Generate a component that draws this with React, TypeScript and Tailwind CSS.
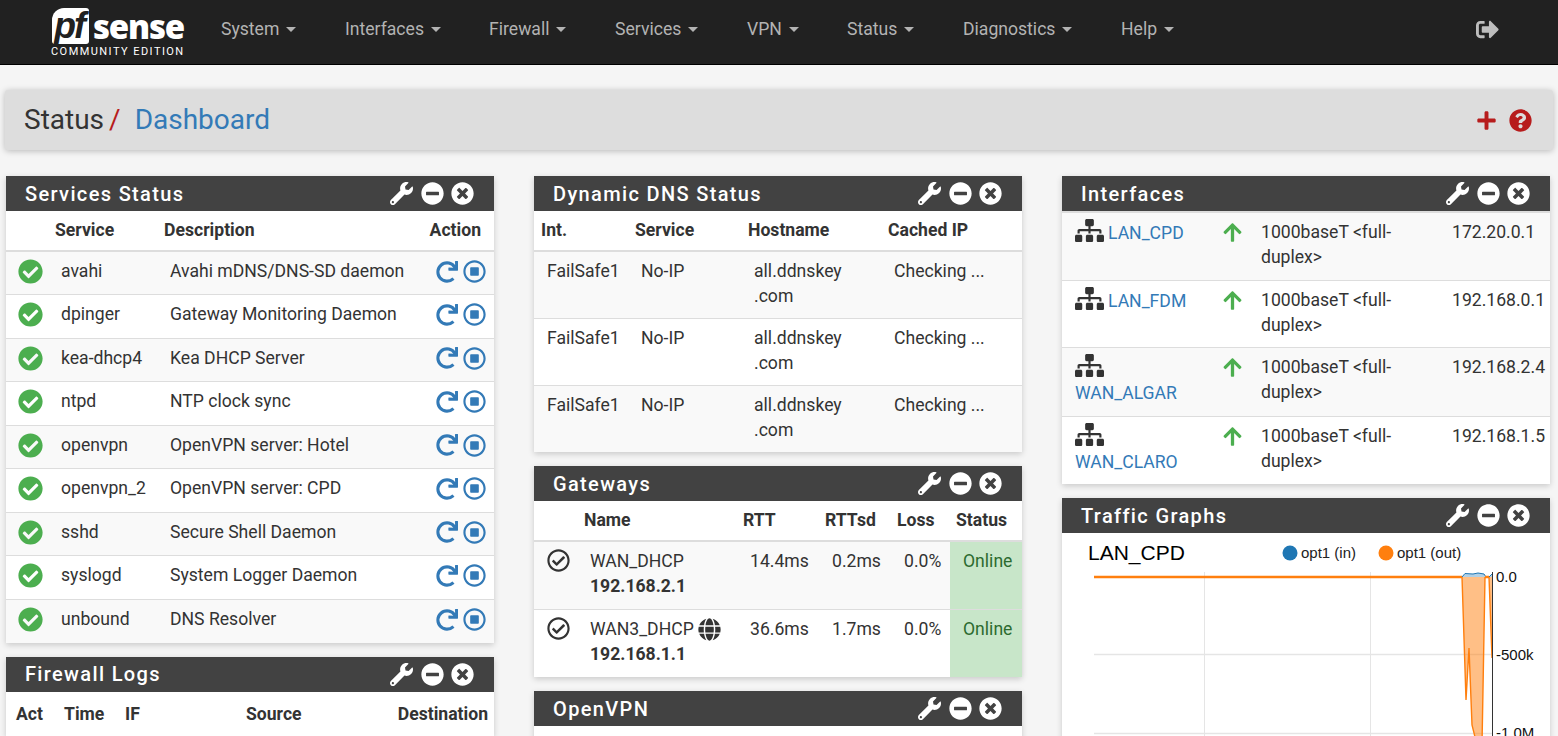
import type { ReactNode } from 'react'
import {
  FaArrowUp,
  FaCheckCircle,
  FaGlobe,
  FaMinusCircle,
  FaPlus,
  FaQuestionCircle,
  FaRedo,
  FaRegCheckCircle,
  FaRegStopCircle,
  FaSignOutAlt,
  FaSitemap,
  FaTimesCircle,
  FaWrench,
} from 'react-icons/fa'

const navItems = [
  { label: 'System', w: 'w-[124px]' },
  { label: 'Interfaces', w: 'w-[144px]' },
  { label: 'Firewall', w: 'w-[126px]' },
  { label: 'Services', w: 'w-[132px]' },
  { label: 'VPN', w: 'w-[100px]' },
  { label: 'Status', w: 'w-[116px]' },
  { label: 'Diagnostics', w: 'w-[158px]' },
  { label: 'Help', w: 'w-[60px]' },
]

const services = [
  ['avahi', 'Avahi mDNS/DNS-SD daemon'],
  ['dpinger', 'Gateway Monitoring Daemon'],
  ['kea-dhcp4', 'Kea DHCP Server'],
  ['ntpd', 'NTP clock sync'],
  ['openvpn', 'OpenVPN server: Hotel'],
  ['openvpn_2', 'OpenVPN server: CPD'],
  ['sshd', 'Secure Shell Daemon'],
  ['syslogd', 'System Logger Daemon'],
  ['unbound', 'DNS Resolver'],
]

const interfaces = [
  { name: 'LAN_CPD', ip: '172.20.0.1', h: 'h-[68px]' },
  { name: 'LAN_FDM', ip: '192.168.0.1', h: 'h-[67px]' },
  { name: 'WAN_ALGAR', ip: '192.168.2.4', h: 'h-[69px]' },
  { name: 'WAN_CLARO', ip: '192.168.1.5', h: 'h-[68px]' },
]

function Panel({ title, children }: { title: string; children?: ReactNode }) {
  return (
    <section className="mb-[14px] bg-white shadow-[0_2px_6px_rgba(0,0,0,0.18)]">
      <div className="flex h-[35px] items-center bg-[#424242] pl-[19px] pr-[20px] text-white">
        <h2 className="flex-1 pt-[2px] text-[20px] font-medium tracking-[1.35px]">{title}</h2>
        <FaWrench className="mr-[8px] text-[23px]" />
        <FaMinusCircle className="mr-[7px] text-[23px]" />
        <FaTimesCircle className="text-[23px]" />
      </div>
      {children}
    </section>
  )
}

function ServicesTable() {
  return (
    <table className="w-full table-fixed border-collapse">
      <colgroup>
        <col className="w-[49px]" />
        <col className="w-[109px]" />
        <col />
        <col className="w-[70px]" />
      </colgroup>
      <thead>
        <tr className="h-[40px] border-b-2 border-[#ddd] text-left">
          <th></th>
          <th className="font-bold">Service</th>
          <th className="font-bold">Description</th>
          <th className="pr-[13px] text-right font-bold">Action</th>
        </tr>
      </thead>
      <tbody>
        {services.map(([name, desc], i) => (
          <tr key={name} className={`h-[43.5px] border-t border-[#ddd] first:border-t-0 [&>td]:pb-[3px] ${i % 2 === 0 ? 'bg-[#f9f9f9]' : 'bg-white'}`}>
            <td className="pl-[12px]">
              <FaCheckCircle className="text-[25px] text-[#4cae4f]" />
            </td>
            <td className="pl-[6px]">{name}</td>
            <td className="pl-[6px]">{desc}</td>
            <td>
              <div className="flex items-center justify-end gap-[5px] pr-[8px] text-[#337ab7]">
                <FaRedo className="text-[22px]" />
                <FaRegStopCircle className="text-[23px]" />
              </div>
            </td>
          </tr>
        ))}
      </tbody>
    </table>
  )
}

function DnsTable() {
  return (
    <table className="w-full table-fixed border-collapse">
      <colgroup>
        <col className="w-[101px]" />
        <col className="w-[113px]" />
        <col className="w-[140px]" />
        <col />
      </colgroup>
      <thead>
        <tr className="h-[40px] border-b-2 border-[#ddd] text-left">
          <th className="pl-[7px] font-bold">Int.</th>
          <th className="font-bold">Service</th>
          <th className="font-bold">Hostname</th>
          <th className="font-bold">Cached IP</th>
        </tr>
      </thead>
      <tbody>
        {[0, 1, 2].map((i) => (
          <tr key={i} className={`h-[67px] border-t border-[#ddd] first:border-t-0 align-top ${i === 1 ? 'bg-white' : 'bg-[#f9f9f9]'}`}>
            <td className="pl-[13px] pt-[7px]">FailSafe1</td>
            <td className="pl-[6px] pt-[7px]">No-IP</td>
            <td className="pl-[6px] pt-[7px]">
              all.ddnskey
              <br />
              .com
            </td>
            <td className="pl-[6px] pt-[7px]">Checking ...</td>
          </tr>
        ))}
      </tbody>
    </table>
  )
}

function GatewaysTable() {
  const rows = [
    { name: 'WAN_DHCP', ip: '192.168.2.1', rtt: '14.4ms', sd: '0.2ms', globe: false },
    { name: 'WAN3_DHCP', ip: '192.168.1.1', rtt: '36.6ms', sd: '1.7ms', globe: true },
  ]
  return (
    <table className="w-full table-fixed border-collapse">
      <colgroup>
        <col className="w-[50px]" />
        <col className="w-[159px]" />
        <col className="w-[82px]" />
        <col className="w-[72px]" />
        <col className="w-[53px]" />
        <col />
      </colgroup>
      <thead>
        <tr className="h-[40px] border-b-2 border-[#ddd] text-left">
          <th></th>
          <th className="font-bold">Name</th>
          <th className="font-bold">RTT</th>
          <th className="font-bold">RTTsd</th>
          <th className="font-bold">Loss</th>
          <th className="pl-[6px] font-bold">Status</th>
        </tr>
      </thead>
      <tbody>
        {rows.map((r, i) => (
          <tr key={r.name} className={`h-[68px] border-t border-[#ddd] first:border-t-0 align-top ${i === 0 ? 'bg-[#f9f9f9]' : 'bg-white'}`}>
            <td className="pl-[13px] pt-[7px]">
              <FaRegCheckCircle className="text-[23px] text-[#333]" />
            </td>
            <td className="pl-[6px] pt-[7px]">
              <div className="flex items-center gap-[4px]">
                {r.name}
                {r.globe && <FaGlobe className="text-[23px] text-[#333]" />}
              </div>
              <div className="font-bold">{r.ip}</div>
            </td>
            <td className="pl-[7px] pt-[7px]">{r.rtt}</td>
            <td className="pl-[7px] pt-[7px]">{r.sd}</td>
            <td className="pl-[7px] pt-[7px]">0.0%</td>
            <td className="bg-[#c8e6c9] pl-[13px] pt-[7px] text-[#2c6b2f]">Online</td>
          </tr>
        ))}
      </tbody>
    </table>
  )
}

function InterfacesTable() {
  return (
    <table className="w-full table-fixed border-collapse border-t-2 border-[#ddd]">
      <colgroup>
        <col className="w-[151px]" />
        <col className="w-[48px]" />
        <col className="w-[191px]" />
        <col />
      </colgroup>
      <tbody>
        {interfaces.map((r, i) => (
          <tr key={r.name} className={`${r.h} border-t border-[#ddd] first:border-t-0 align-top ${i % 2 === 0 ? 'bg-[#f9f9f9]' : 'bg-white'}`}>
            <td className="pl-[13px] pr-[6px] pt-[6px]">
              <FaSitemap className="-mt-[3px] mr-[4px] inline-block align-[-6px] text-[29px] text-[#333]" />
              <a className="text-[#337ab7]">{r.name}</a>
            </td>
            <td className="pl-[9px] pt-[7px]">
              <FaArrowUp className="mt-[2px] text-[21px] text-[#4cae4f]" />
            </td>
            <td className="pl-[0px] pt-[7px]">
              1000baseT &lt;full-
              <br />
              duplex&gt;
            </td>
            <td className="pl-[0px] pt-[7px]">{r.ip}</td>
          </tr>
        ))}
      </tbody>
    </table>
  )
}

function TrafficChart() {
  return (
    <svg width="488" height="240" viewBox="1062 533 488 240" className="block" fontFamily="'Liberation Sans', Arial, sans-serif">
      <text x="1088" y="560" fontSize="21" fill="#000">LAN_CPD</text>
      <circle cx="1290" cy="553" r="7.5" fill="#1f77b4" />
      <text x="1301" y="558" fontSize="15" fill="#222">opt1 (in)</text>
      <circle cx="1386" cy="553" r="7.5" fill="#ff7f0e" />
      <text x="1397" y="558" fontSize="15" fill="#222">opt1 (out)</text>
      <path d="M1204.5 572V773M1370.5 572V773" stroke="#e5e5e5" strokeWidth="1" fill="none" />
      <path d="M1094 654.5H1492M1094 733.5H1492" stroke="#e5e5e5" strokeWidth="1.5" fill="none" />
      <path
        d="M1462 577L1466 700L1469 648L1472 725L1477 745L1482 745L1485 577L1489 577L1492 658L1492 577Z"
        fill="#ff7f0e"
        fillOpacity="0.5"
      />
      <path d="M1462 577L1465 573.5L1473 574L1478 573L1484 574L1486 577L1489 577L1492 574L1492 577Z" fill="#1f77b4" fillOpacity="0.35" />
      <path d="M1462 577L1465 573.5L1473 574L1478 573L1484 574L1486 577L1489 577L1492 574" stroke="#1f77b4" strokeWidth="1" fill="none" />
      <path d="M1094 577H1462M1485 577H1489" stroke="#ff7f0e" strokeWidth="2.4" fill="none" />
      <path
        d="M1462 577L1466 700L1469 648L1472 725L1477 745M1482 745L1485 577M1489 577L1492 658"
        stroke="#ff7f0e"
        strokeWidth="1.4"
        fill="none"
      />
      <path d="M1492.5 572V773" stroke="#333" strokeWidth="1" />
      <text x="1496" y="582" fontSize="15" fill="#111">0.0</text>
      <text x="1496" y="660" fontSize="15" fill="#111">-500k</text>
      <text x="1496" y="738" fontSize="15" fill="#111">-1.0M</text>
    </svg>
  )
}

export default function App() {
  return (
    <div className="h-[736px] overflow-hidden bg-[#f5f5f5] font-['Roboto',sans-serif] text-[17.6px] leading-[25.14px] text-[#333]">
      <nav className="flex h-[65px] items-center border-b border-black bg-[#212121]">
        <div className="ml-[52px] flex w-[169px] shrink-0 flex-col">
          <div className="flex h-[38px] items-end">
            <span className="flex h-[36px] w-[37px] items-center justify-center rounded-[3px] rounded-tl-[12px] bg-white pr-[3px] font-['Liberation_Sans',sans-serif] text-[36px] font-bold italic leading-none tracking-[-2px] text-[#212121]">
              pf
            </span>
            <span className="ml-[4px] font-['Open_Sans',sans-serif] text-[33px] font-extrabold leading-[34px] tracking-[-1.2px] text-white">sense</span>
          </div>
          <span className="mt-[1px] -ml-[1px] whitespace-nowrap text-[11px] font-normal leading-[13px] tracking-[1.45px] text-white">COMMUNITY EDITION</span>
        </div>
        {navItems.map((item) => (
          <div key={item.label} className={`flex shrink-0 items-center gap-[7px] pb-[4px] text-[#b3b3b3] ${item.w}`}>
            {item.label}
            <span className="h-0 w-0 border-x-[5px] border-t-[5px] border-x-transparent border-t-[#b3b3b3]" />
          </div>
        ))}
        <div className="ml-auto mr-[59px] pb-[5px] text-[#bdbdbd]">
          <FaSignOutAlt className="text-[23px]" />
        </div>
      </nav>

      <div className="mx-[5px] mt-[25px] flex h-[60px] items-center rounded-[3px] bg-[#ddd] pl-[19px] pr-[21px] shadow-[0_1px_6px_rgba(0,0,0,0.25)]">
        <h1 className="flex-1 text-[28px] leading-none">
          Status<span className="ml-[5px] text-[#b71c1c]">/</span>
          <span className="ml-[14px] text-[#337ab7]">Dashboard</span>
        </h1>
        <FaPlus className="mr-[12px] text-[21px] text-[#b71c1c]" />
        <FaQuestionCircle className="text-[23px] text-[#b71c1c]" />
      </div>

      <div className="mt-[26px] grid grid-cols-[488px_488px_488px] gap-x-[40px] pl-[6px]">
        <div>
          <Panel title="Services Status">
            <ServicesTable />
          </Panel>
          <Panel title="Firewall Logs">
            <table className="w-full table-fixed border-collapse">
              <colgroup>
                <col className="w-[58px]" />
                <col className="w-[61px]" />
                <col className="w-[121px]" />
                <col className="w-[110px]" />
                <col />
              </colgroup>
              <thead>
                <tr className="h-[44px] text-left">
                  <th className="pl-[10px] pt-[2px] font-bold">Act</th>
                  <th className="pt-[2px] font-bold">Time</th>
                  <th className="pt-[2px] font-bold">IF</th>
                  <th className="pt-[2px] font-bold">Source</th>
                  <th className="pr-[6px] pt-[2px] text-right font-bold">Destination</th>
                </tr>
              </thead>
            </table>
          </Panel>
        </div>
        <div>
          <Panel title="Dynamic DNS Status">
            <DnsTable />
          </Panel>
          <Panel title="Gateways">
            <GatewaysTable />
          </Panel>
          <Panel title="OpenVPN">
            <div className="h-[40px]" />
          </Panel>
        </div>
        <div>
          <Panel title="Interfaces">
            <InterfacesTable />
          </Panel>
          <Panel title="Traffic Graphs">
            <TrafficChart />
          </Panel>
        </div>
      </div>
    </div>
  )
}
